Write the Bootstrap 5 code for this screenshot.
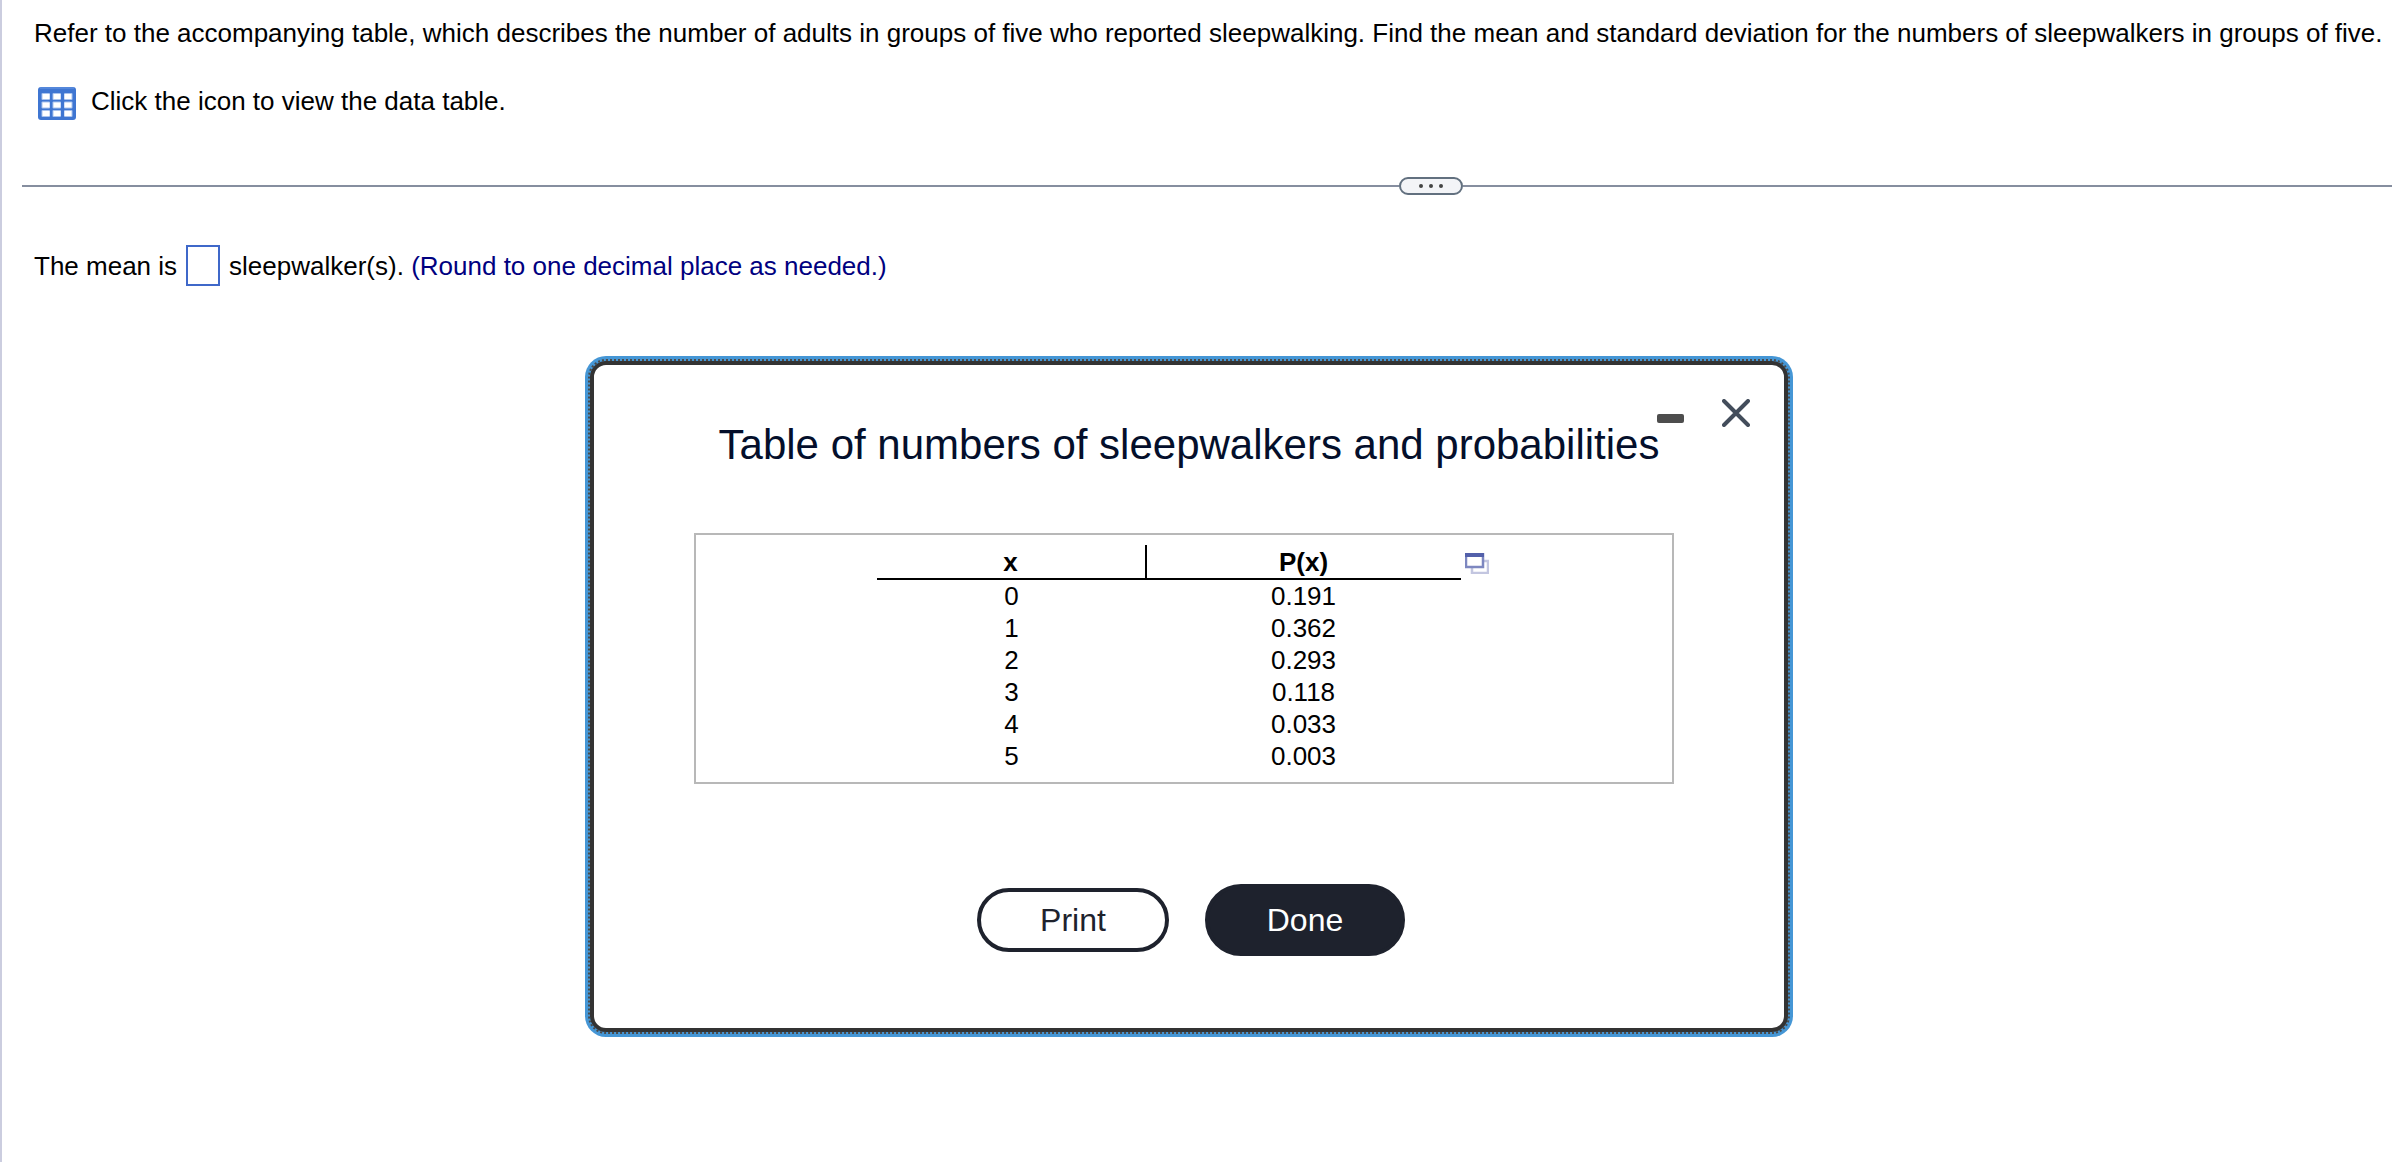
<!DOCTYPE html>
<html lang="en">
<head>
<meta charset="utf-8">
<meta name="viewport" content="width=device-width, initial-scale=1">
<title>Sleepwalkers</title>
<link href="https://cdn.jsdelivr.net/npm/bootstrap@5.3.0/dist/css/bootstrap.min.css" rel="stylesheet">
<style>
body { font-family: "Liberation Sans", Arial, sans-serif; font-size: 26px; line-height: 32px; color: #000; background: #fff; }
.exercise { border-left: 2px solid #cbcddf; padding-top: 17px; }
.indent { padding-left: 32px; }
.data-link { margin-top: 36px; gap: 15px; padding-left: 36px; }
.data-link svg { margin-top: 2px; }
.divider { margin: 57px 0 50px 20px; }
.rule { height: 2px; background: #868e9f; }
.rule-start { flex: 597 1 0; }
.rule-end { flex: 403 1 0; }
.pill { width: 64px; height: 18px; border: 2px solid #62707f; background: #f3f4f7; gap: 6px; }
.pill span { width: 4px; height: 4px; border-radius: 50%; background: #444; }
.answer-row { gap: 9px; }
.answer { width: 34px; height: 41px; border: 2px solid #3f68c9; padding: 0 2px; }
.hint { color: #000080; }
.stage { padding: 75px 16px 48px 0; }
.panel { max-width: 1198px; border: 4px solid #333; border-radius: 16px; box-shadow: 0 0 0 5px #4596d5; outline: 2px dotted #4a4a4a; padding: 56px 0 72px; }
.panel h1 { font-size: 42px; line-height: 48px; color: #040f2b; }
.window-tools { top: 34px; right: 34px; gap: 37px; }
.frame { margin: 64px 110px 100px 100px; border: 2px solid #b8b8b8; padding: 10px 3px 10px 0; gap: 4px; }
.prob { width: 584px; border-collapse: separate; border-spacing: 0; }
.prob th, .prob td { padding: 0; text-align: center; }
.prob th { height: 35px; border-bottom: 2px solid #000; }
.prob th:first-child { width: 270px; border-right: 2px solid #000; }
.copy { margin-top: 8px; }
.actions { gap: 36px; padding-left: 4px; }
.btn-round { --bs-btn-font-size: 32px; --bs-btn-line-height: 36px; --bs-btn-padding-y: 0; --bs-btn-color: #1e222d; --bs-btn-border-color: #1e222d; --bs-btn-border-width: 4px; width: 192px; height: 64px; }
.btn-fill { --bs-btn-bg: #1e222d; --bs-btn-color: #fff; width: 200px; height: 72px; }
</style>
<script src="https://cdn.jsdelivr.net/npm/bootstrap@5.3.0/dist/js/bootstrap.bundle.min.js"></script>
</head>
<body>
<main class="exercise min-vh-100">
  <p class="indent mb-0">Refer to the accompanying table, which describes the number of adults in groups of five who reported sleepwalking. Find the mean and standard deviation for the numbers of sleepwalkers in groups of five.</p>
  <a href="#data" class="data-link d-flex align-items-start text-decoration-none text-black">
    <svg width="38" height="33" viewBox="0 0 38 33" aria-hidden="true">
      <rect width="38" height="33" rx="3" fill="#3f76d2"/>
      <path d="M2 1H36" stroke="#6a98e4" stroke-width="1"/>
      <g fill="#a9c3ee"><rect x="3.500" y="6" width="8.500" height="7" rx="1"/><rect x="14.500" y="6" width="8.500" height="7" rx="1"/><rect x="26" y="6" width="8.500" height="7" rx="1"/><rect x="3.500" y="14.500" width="8.500" height="7" rx="1"/><rect x="14.500" y="14.500" width="8.500" height="7" rx="1"/><rect x="26" y="14.500" width="8.500" height="7" rx="1"/><rect x="3.500" y="23" width="8.500" height="7" rx="1"/><rect x="14.500" y="23" width="8.500" height="7" rx="1"/><rect x="26" y="23" width="8.500" height="7" rx="1"/></g>
      <g fill="#fff"><rect x="4.500" y="7" width="7" height="5"/><rect x="15.500" y="7" width="7" height="5"/><rect x="26.500" y="7" width="7" height="5"/><rect x="4.500" y="15.500" width="7" height="5"/><rect x="15.500" y="15.500" width="7" height="5"/><rect x="26.500" y="15.500" width="7" height="5"/><rect x="4.500" y="24" width="7" height="5"/><rect x="15.500" y="24" width="7" height="5"/><rect x="26.500" y="24" width="7" height="5"/></g>
    </svg>
    <span>Click the icon to view the data table.</span>
  </a>
  <div class="divider d-flex align-items-center">
    <div class="rule rule-start"></div>
    <button type="button" class="pill rounded-pill d-flex align-items-center justify-content-center p-0" aria-label="Resize panels"><span></span><span></span><span></span></button>
    <div class="rule rule-end"></div>
  </div>
  <div class="answer-row indent d-flex align-items-center">
    <label for="mean">The mean is</label>
    <input id="mean" class="answer" type="text">
    <span>sleepwalker(s). <span class="hint">(Round to one decimal place as needed.)</span></span>
  </div>
  <div class="stage">
    <section id="data" class="panel position-relative bg-white w-100 mx-auto" role="dialog" aria-labelledby="data-title">
      <h1 id="data-title" class="text-center fw-normal mb-0">Table of numbers of sleepwalkers and probabilities</h1>
      <div class="window-tools position-absolute d-flex">
        <button type="button" class="border-0 bg-transparent p-0 d-flex" aria-label="Minimize"><svg width="28" height="28" viewBox="0 0 28 28"><rect y="15" width="27" height="9" rx="2" fill="#4d4d4d"/></svg></button>
        <button type="button" class="border-0 bg-transparent p-0 d-flex" aria-label="Close"><svg width="28" height="28" viewBox="0 0 28 28"><path d="M2 2L26 26M26 2L2 26" stroke="#434d5b" stroke-width="4" stroke-linecap="round"/></svg></button>
      </div>
      <div class="frame d-flex justify-content-center align-items-start">
        <table class="prob">
          <thead><tr><th scope="col">x</th><th scope="col">P(x)</th></tr></thead>
          <tbody>
            <tr><td>0</td><td>0.191</td></tr>
            <tr><td>1</td><td>0.362</td></tr>
            <tr><td>2</td><td>0.293</td></tr>
            <tr><td>3</td><td>0.118</td></tr>
            <tr><td>4</td><td>0.033</td></tr>
            <tr><td>5</td><td>0.003</td></tr>
          </tbody>
        </table>
        <button type="button" class="copy border-0 bg-transparent p-0 d-flex" aria-label="Copy table"><svg width="24" height="21" viewBox="0 0 24 21" fill="none"><rect x="7" y="8" width="16" height="12" fill="#fff" stroke="#c3c6e0" stroke-width="2.500"/><rect x="1" y="1" width="17" height="13" fill="#fff" stroke="#7d87c0" stroke-width="2.500"/><path d="M0 2H19" stroke="#5360aa" stroke-width="4"/></svg></button>
      </div>
      <div class="actions d-flex justify-content-center align-items-center">
        <button type="button" class="btn btn-round rounded-pill">Print</button>
        <button type="button" class="btn btn-round btn-fill rounded-pill">Done</button>
      </div>
    </section>
  </div>
</main>
</body>
</html>
